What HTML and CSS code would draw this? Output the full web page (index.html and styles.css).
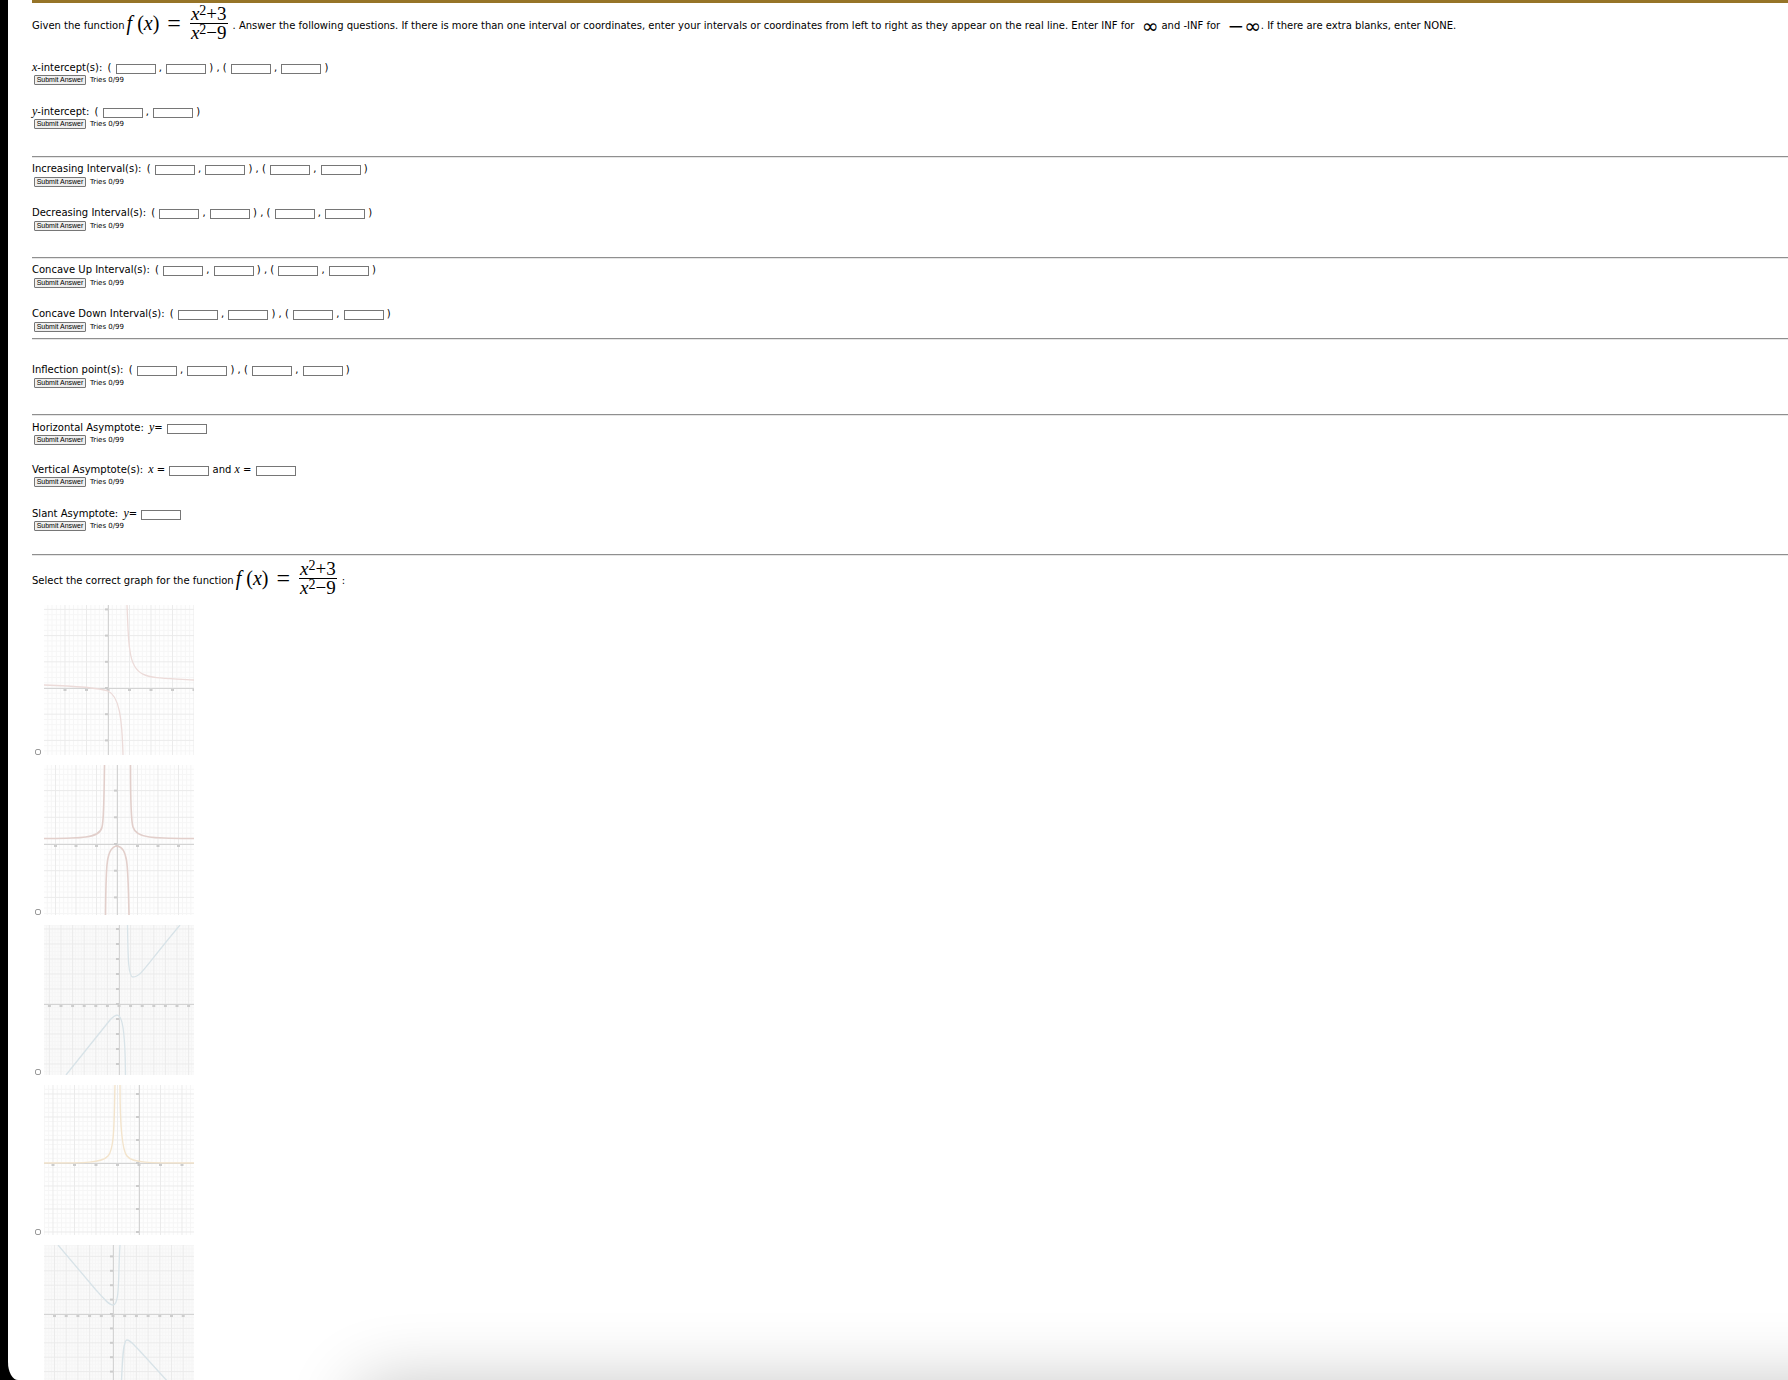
FILE: index.html
```html
<!DOCTYPE html>
<html lang="en">
<head>
<meta charset="utf-8">
<title>Rational function problem</title>
<link rel="stylesheet" href="styles.css">
</head>
<body>
<div class="window">
<main class="problem">
  <p class="intro">Given the function<span class="formula"><span class="fx"><i>f</i> (<i>x</i>)</span><span class="eq">=</span><span class="frac"><span class="num"><i>x</i><sup>2</sup>+3</span><span class="den"><i>x</i><sup>2</sup>−9</span></span></span>. Answer the following questions. If there is more than one interval or coordinates, enter your intervals or coordinates from left to right as they appear on the real line. Enter INF for <span class="inf">∞</span> and -INF for <span class="inf">−∞</span>. If there are extra blanks, enter NONE.</p>
  <form id="answers"></form>
</main>
<div class="shade"></div>
</div>
<script src="app.js"></script>
</body>
</html>
```

FILE: styles.css
```css
* { box-sizing: border-box; }
body { margin: 0; background: #000; color: #000; font: 10px/14px "DejaVu Sans", Verdana, sans-serif; }
.window { position: relative; height: 100vh; margin-left: 8px; overflow: hidden; background: #fff; border-bottom-left-radius: 10px 18px; }
.problem { margin-left: 24px; border-top: 3px solid #967428; }
p { margin: 0; }
.intro, .select { display: flex; align-items: center; white-space: pre; }
.intro { height: 46px; margin-bottom: 11px; }
.select { height: 42px; margin-bottom: 3px; }
.formula { display: flex; align-items: center; font-family: "Liberation Serif", serif; font-size: 20px; line-height: 20px; margin: 0 5px 6px 2px; }
.eq { font-size: 24px; margin: 0 9px 0 8px; }
.frac { display: flex; flex-direction: column; font-size: 19px; line-height: 18px; text-align: center; }
.num { padding: 0 1px; border-bottom: 1px solid #000; }
sup { font-size: 14px; line-height: 1px; vertical-align: 5px; }
.inf { font-size: 20px; margin-left: 4px; }
.line { height: 14px; white-space: pre; }
.line i { font-family: "Liberation Serif", serif; font-size: 12px; }
.name { margin-right: 2px; }
.line input { width: 40px; height: 10px; margin: 0 0 0 1px; padding: 0 1px; border: 1px solid #767676; font-size: 7px; line-height: 8px; vertical-align: 0; }
.submit { display: flex; align-items: center; height: 12px; font-size: 7px; line-height: 10px; gap: 4px; padding-left: 2px; }
.submit button { width: 52px; height: 10px; padding: 0; border: 1px solid #767676; border-radius: 1px; background: #efefef; font: 7px/8px "Liberation Sans", Arial, sans-serif; color: #000; }
.question { margin-bottom: 18px; }
.question.before-rule { margin-bottom: 25px; }
.question.roomy { margin-bottom: 26px; }
.question.snug { margin-bottom: 16px; }
.question.last { margin-bottom: 22px; }
.question.tight { margin-bottom: 5px; }
hr { margin: 0 0 4px; height: 2px; border: 0; border-top: 1px solid #8f8f8f; border-bottom: 1px solid #e6e6e6; }
hr.wide { margin-bottom: 23px; }
.choice { display: flex; align-items: flex-end; gap: 3px; margin-bottom: 10px; padding-left: 3px; }
.choice input { appearance: none; width: 6px; height: 6px; margin: 0; border: 1px solid #9a9a9a; border-radius: 2px; }
.choice svg { display: block; width: 150px; height: 150px; }
.shade { position: absolute; right: -100px; top: 100%; left: 350px; height: 200px; border-radius: 20px; box-shadow: 0 4px 70px rgba(0, 0, 0, .24); }
```

FILE: app.js
```js
const form = document.getElementById('answers');
const box = name => `<input type="text" aria-label="${name}">`;
const pair = name => `( ${box(name + ' left')} , ${box(name + ' right')} )`;
const question = (label, html, cls = '') => `<div class="question ${cls}"><div class="line"><span class="name">${label}:</span> ${html}</div><div class="submit"><button type="button">Submit Answer</button><span>Tries 0/99</span></div></div>`;
const two = (label, name, cls) => question(label, `${pair(name + ' 1')} , ${pair(name + ' 2')}`, cls);

const formula = document.querySelector('.formula').outerHTML;
let html = two('<i>x</i>-intercept(s)', 'x-intercept')
  + question('<i>y</i>-intercept', pair('y-intercept'), 'roomy') + '<hr>'
  + two('Increasing Interval(s)', 'Increasing')
  + two('Decreasing Interval(s)', 'Decreasing', 'before-rule') + '<hr>'
  + two('Concave Up Interval(s)', 'Concave up')
  + two('Concave Down Interval(s)', 'Concave down', 'tight') + '<hr class="wide">'
  + two('Inflection point(s)', 'Inflection', 'before-rule') + '<hr>'
  + question('Horizontal Asymptote', `<i>y</i>= ${box('Horizontal asymptote')}`, 'snug')
  + question('Vertical Asymptote(s)', `<i>x</i> = ${box('Vertical asymptote 1')} and <i>x</i> = ${box('Vertical asymptote 2')}`)
  + question('Slant Asymptote', `<i>y</i>= ${box('Slant asymptote')}`, 'last') + '<hr>'
  + `<p class="select">Select the correct graph for the function${formula}:</p>`;

// Each graph: axis position, major grid step, minor divisions, curve colour and paths.
const graphs = [
  { ax: 64, ay: 83, sx: 21.5, sy: 26.2, n: 5, color: '#ecdbd9', w: 1.3, bg: '#fefefe',
    d: ['M0 80C30 81 52 82 64 86C75 91 78 112 79 150', 'M83 0C84 22 84 35 86 46C90 76 105 72 150 75'] },
  { ax: 73, ay: 79, sx: 20.5, sy: 26.7, n: 5, color: '#e2cfcb', w: 1.6, bg: '#fefefe',
    d: ['M0 73.500C33 73.500 56 74 58 62C60 56 60 30 60.500 0', 'M86.500 0C86.500 30 87 56 89 62C92 74 112 73.500 150 73.500', 'M61.500 150C62 100 62 82 73 81C84 82 84 100 85 150'] },
  { ax: 75, ay: 79, sx: 11.6, sy: 15, n: 4, color: '#d8e3e8', w: 1.3, bg: '#fafafa',
    d: ['M22 150L66 95C76 84 81 88 81.500 150', 'M83.500 0C84 30 84 52 89 52C97 52 100 43 136 0'] },
  { ax: 95, ay: 78, sx: 21.5, sy: 23, n: 5, color: '#f3e4cc', w: 1.4, bg: '#fefefe',
    d: ['M0 78C42 78 58 78 64 71C71 64 70 30 71 0', 'M76 0C76 30 77 64 83 71C88 78 104 78 150 78'] },
  { ax: 69, ay: 69, sx: 11.7, sy: 14.4, n: 4, color: '#d8e3e8', w: 1.3, bg: '#fafafa',
    d: ['M14 0L52 45C60 54 65 60 69 60C76 60 74 30 76 0', 'M77 150C78 118 79 95 83 95C87 95 92 102 136 150'] },
];

function drawGraph(g) {
  let minor = '', major = '', marks = '';
  const lines = (origin, step, n, path, mark) => {
    const unit = step / n;
    for (let k = Math.ceil(-origin / unit); origin + k * unit <= 150; k++) {
      const p = origin + k * unit;
      if (k % n) minor += path(p);
      else { major += path(p); marks += mark(p); }
    }
  };
  lines(g.ax, g.sx, g.n, p => `M${p} 0V150`, p => `<rect x="${p - 1.5}" y="${g.ay + 1}" width="3" height="2"/>`);
  lines(g.ay, g.sy, g.n, p => `M0 ${p}H150`, p => `<rect x="${g.ax - 3}" y="${p - 1}" width="3" height="2"/>`);
  return `<svg viewBox="0 0 150 150" fill="none"><rect width="150" height="150" fill="${g.bg}"/>
    <path d="${minor}" stroke="#f6f6f6"/><path d="${major}" stroke="#ebebeb"/>
    <path d="M0 ${g.ay + .5}H150M${g.ax + .5} 0V150" stroke="#d4d4d4"/><g fill="#cccccc">${marks}</g>
    ${g.d.map(d => `<path d="${d}" stroke="${g.color}" stroke-width="${g.w}"/>`).join('')}</svg>`;
}
html += graphs.map((g, i) => `<label class="choice"><input type="radio" name="graph" aria-label="Graph ${i + 1}">${drawGraph(g)}</label>`).join('');
form.innerHTML = html;
```
